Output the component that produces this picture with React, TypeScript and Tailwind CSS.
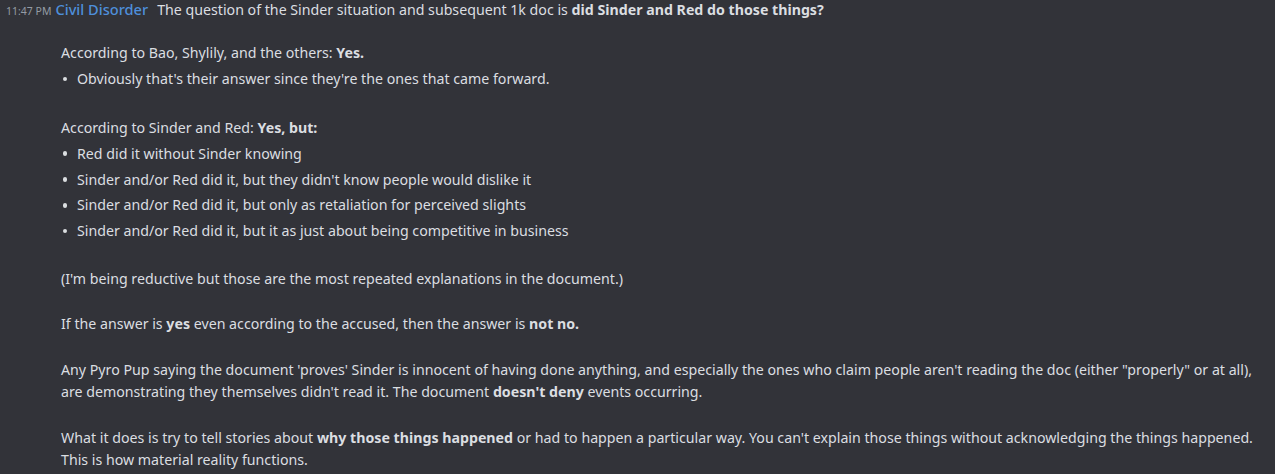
import React from "react";

const Bullet = ({ children }: { children: React.ReactNode }) => (
  <div className="flex h-[22px] items-center mt-[3.85px]">
    <span className="w-[16px] flex">
      <span className="block ml-[1.5px] w-[4.5px] h-[4.5px] rounded-full bg-[#dbdee1]" />
    </span>
    <span>{children}</span>
  </div>
);

export default function App() {
  return (
    <div
      className="w-[1275px] h-[474px] bg-[#323339] text-[#dbdee1] overflow-hidden"
      style={{ fontFamily: '"Noto Sans", "Open Sans", sans-serif' }}
    >
      <div className="text-[14.2px] leading-[22px]">
        <div className="flex items-baseline mt-[-2px] h-[22px] whitespace-nowrap">
          <span className="text-[10.5px] text-[#949ba4] ml-[6px] mr-[4px]">11:47 PM</span>
          <span className="text-[14.6px] font-medium text-[#4e8fdb] mr-[9px]">Civil Disorder</span>
          <span>
            The question of the Sinder situation and subsequent 1k doc is{" "}
            <b>did Sinder and Red do those things?</b>
          </span>
        </div>
        <div className="pl-[61px] pr-[8px]">
          <div className="h-[22px]" />
          <div>
            According to Bao, Shylily, and the others: <b>Yes.</b>
          </div>
          <Bullet>Obviously that's their answer since they're the ones that came forward.</Bullet>
          <div className="h-[27px]" />
          <div>
            According to Sinder and Red: <b>Yes, but:</b>
          </div>
          <Bullet>Red did it without Sinder knowing</Bullet>
          <Bullet>Sinder and/or Red did it, but they didn't know people would dislike it</Bullet>
          <Bullet>Sinder and/or Red did it, but only as retaliation for perceived slights</Bullet>
          <Bullet>Sinder and/or Red did it, but it as just about being competitive in business</Bullet>
          <div className="h-[25.6px]" />
          <div>(I'm being reductive but those are the most repeated explanations in the document.)</div>
          <div className="h-[23.5px]" />
          <div>
            If the answer is <b>yes</b> even according to the accused, then the answer is <b>not no.</b>
          </div>
          <div className="h-[23.5px]" />
          <div className="leading-[22.5px]">
            Any Pyro Pup saying the document 'proves' Sinder is innocent of having done anything, and especially the ones who claim people aren't reading the doc (either "properly" or at all), are demonstrating they themselves didn't read it. The document <b>doesn't deny</b> events occurring.
          </div>
          <div className="h-[23px]" />
          <div className="leading-[22.5px]">
            What it does is try to tell stories about <b>why those things happened</b> or had to happen a particular way. You can't explain those things without acknowledging the things happened. This is how material reality functions.
          </div>
        </div>
      </div>
    </div>
  );
}
